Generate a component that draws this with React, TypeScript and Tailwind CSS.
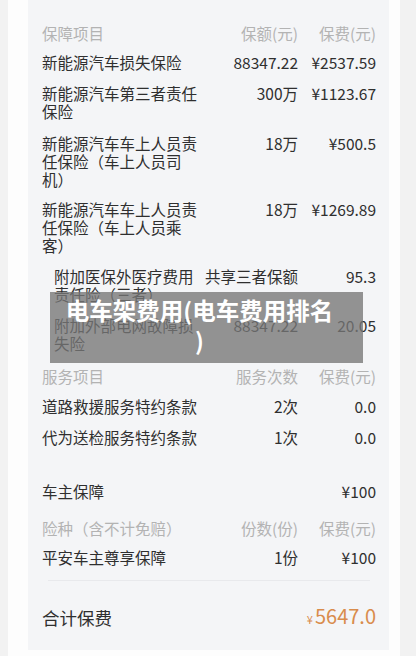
import React from "react";

type Row = { name: string[]; mid: string; fee: string; indent?: boolean; head?: boolean };

const font = { fontFamily: '"Noto Sans CJK SC", "Noto Sans", sans-serif' };

function TableRow({ row, className = "" }: { row: Row; className?: string }) {
  const color = row.head ? "text-[#b3b3b3]" : "text-[#2f2f2f]";
  return (
    <div className={`flex items-start text-[15.5px] leading-[18px] ${color} ${className}`}>
      <div className={`w-[158px] shrink-0 ${row.indent ? "pl-3" : ""}`}>
        {row.name.map((l, i) => (
          <div key={i}>{l}</div>
        ))}
      </div>
      <div className="flex-1 text-right whitespace-nowrap">{row.mid}</div>
      <div className="w-[78px] shrink-0 text-right whitespace-nowrap">{row.fee}</div>
    </div>
  );
}

export default function App() {
  return (
    <div className="w-[416px] h-[656px] bg-[#f2f2f2] overflow-hidden" style={font}>
      <div className="ml-2 w-[392px] h-full bg-[#fdfdfd] pl-5 pr-[11px]">
        <div className="relative bg-[#f4f5f7] pl-[14px] pr-[13px] pt-6 pb-[19px]">
          <TableRow row={{ name: ["保障项目"], mid: "保额(元)", fee: "保费(元)", head: true }} />
          <TableRow className="mt-[11px]" row={{ name: ["新能源汽车损失保险"], mid: "88347.22", fee: "¥2537.59" }} />
          <TableRow className="mt-[13px]" row={{ name: ["新能源汽车第三者责任", "保险"], mid: "300万", fee: "¥1123.67" }} />
          <TableRow className="mt-[14px]" row={{ name: ["新能源汽车车上人员责", "任保险（车上人员司", "机）"], mid: "18万", fee: "¥500.5" }} />
          <TableRow className="mt-[12px]" row={{ name: ["新能源汽车车上人员责", "任保险（车上人员乘", "客）"], mid: "18万", fee: "¥1269.89" }} />
          <TableRow className="mt-[13px]" row={{ name: ["附加医保外医疗费用", "责任险（三者）"], mid: "共享三者保额", fee: "95.3", indent: true }} />
          <TableRow className="mt-[13px]" row={{ name: ["附加外部电网故障损", "失险"], mid: "88347.22", fee: "20.05", indent: true }} />
          <TableRow className="mt-[15px]" row={{ name: ["服务项目"], mid: "服务次数", fee: "保费(元)", head: true }} />
          <TableRow className="mt-[12px]" row={{ name: ["道路救援服务特约条款"], mid: "2次", fee: "0.0" }} />
          <TableRow className="mt-[13px]" row={{ name: ["代为送检服务特约条款"], mid: "1次", fee: "0.0" }} />
          <TableRow className="mt-[36px]" row={{ name: ["车主保障"], mid: "", fee: "¥100" }} />
          <TableRow className="mt-[19px]" row={{ name: ["险种（含不计免赔）"], mid: "份数(份)", fee: "保费(元)", head: true }} />
          <TableRow className="mt-[11px]" row={{ name: ["平安车主尊享保障"], mid: "1份", fee: "¥100" }} />
          <div className="mt-[14px] mx-[6px] h-px bg-[#e8e9ec]" />
          <div className="mt-[23px] flex items-center justify-between leading-[24px]">
            <span className="text-[17.5px] text-[#2f2f2f]">合计保费</span>
            <span className="text-[#d98c4c]">
              <span className="text-[11px] mr-[2px]">¥</span>
              <span className="text-[20px]">5647.0</span>
            </span>
          </div>

          {/* watermark banner over the table */}
          <div className="absolute left-[22px] top-[292px] w-[313px] h-[71px] bg-[rgba(118,118,118,0.78)] pl-2 pr-[22px] pt-[3px] text-center text-white font-bold text-[23.5px] leading-[30px] whitespace-nowrap">
            电车架费用(电车费用排名
            <br />)
          </div>
        </div>
      </div>
    </div>
  );
}
